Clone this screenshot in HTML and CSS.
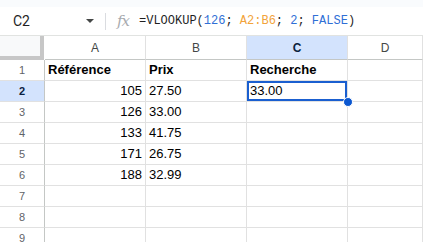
FILE: index.html
```html
<!DOCTYPE html>
<html lang="fr">
<head>
    <meta charset="UTF-8">
    <title>VLOOKUP</title>
    <link rel="stylesheet" href="styles.css">
</head>
<body>

    <div class="top-strip"></div>

    <!-- Formula bar -->
    <div class="formula-bar">
        <div class="name-box">
            <span class="cell-ref">C2</span>
            <span class="caret"></span>
        </div>
        <div class="divider"></div>
        <span class="fx">fx</span>
        <div class="formula">=VLOOKUP(<span class="num">126</span>; <span class="range">A2:B6</span>; <span class="num">2</span>; <span class="num">FALSE</span>)</div>
    </div>

    <!-- Sheet grid -->
    <div class="sheet">
        <div class="corner"></div>
        <div class="col-head">A</div>
        <div class="col-head">B</div>
        <div class="col-head active">C</div>
        <div class="col-head">D</div>

        <div class="row-head">1</div>
        <div class="cell bold">Référence</div>
        <div class="cell bold">Prix</div>
        <div class="cell bold">Recherche</div>
        <div class="cell"></div>

        <div class="row-head active">2</div>
        <div class="cell right">105</div>
        <div class="cell">27.50</div>
        <div class="cell selected">33.00<span class="handle"></span></div>
        <div class="cell"></div>

        <div class="row-head">3</div>
        <div class="cell right">126</div>
        <div class="cell">33.00</div>
        <div class="cell"></div>
        <div class="cell"></div>

        <div class="row-head">4</div>
        <div class="cell right">133</div>
        <div class="cell">41.75</div>
        <div class="cell"></div>
        <div class="cell"></div>

        <div class="row-head">5</div>
        <div class="cell right">171</div>
        <div class="cell">26.75</div>
        <div class="cell"></div>
        <div class="cell"></div>

        <div class="row-head">6</div>
        <div class="cell right">188</div>
        <div class="cell">32.99</div>
        <div class="cell"></div>
        <div class="cell"></div>

        <div class="row-head">7</div>
        <div class="cell"></div>
        <div class="cell"></div>
        <div class="cell"></div>
        <div class="cell"></div>

        <div class="row-head">8</div>
        <div class="cell"></div>
        <div class="cell"></div>
        <div class="cell"></div>
        <div class="cell"></div>

        <div class="row-head">9</div>
        <div class="cell"></div>
        <div class="cell"></div>
        <div class="cell"></div>
        <div class="cell"></div>
    </div>

</body>
</html>
```

FILE: styles.css
```css
body {
    margin: 0;
    background-color: #ffffff;
    font-family: 'Liberation Sans', Arial, sans-serif;
    overflow: hidden;
}

.top-strip {
    height: 7px;
    background-color: #f9fbfd;
}

/* Formula bar */
.formula-bar {
    display: flex;
    align-items: center;
    height: 28px;
    border-bottom: 1px solid #e1e3e1;
}
.name-box {
    display: flex;
    align-items: center;
    justify-content: space-between;
    width: 94px;
    padding-left: 13px;
    box-sizing: border-box;
    padding-right: 0;
}
.cell-ref {
    font-family: Roboto, sans-serif;
    font-size: 14px;
    color: #1f1f1f;
}
.caret {
    width: 0;
    height: 0;
    border-left: 4px solid transparent;
    border-right: 4px solid transparent;
    border-top: 4px solid #444746;
}
.divider {
    width: 1px;
    height: 17px;
    margin-left: 11px;
    background-color: #dadce0;
}
.fx {
    margin-left: 11px;
    width: 22px;
    font-family: 'DejaVu Serif', serif;
    font-style: italic;
    font-size: 15px;
    color: #a8abaf;
    letter-spacing: -1px;
}
.formula {
    font-family: 'Liberation Mono', monospace;
    font-size: 12px;
    color: #1f1f1f;
    white-space: pre;
}
.num {
    color: #2f6fd6;
}
.range {
    color: #f2a33a;
}

/* Grid */
.sheet {
    display: grid;
    grid-template-columns: 45px 101px 101px 101px 1fr;
    grid-template-rows: 24px repeat(9, 21px);
}
.corner {
    background-color: #f8f9fa;
    border-right: 4px solid #c7c7c7;
    border-bottom: 4px solid #c7c7c7;
    box-sizing: border-box;
    margin-right: 1px;
}
.col-head {
    display: flex;
    align-items: center;
    justify-content: center;
    font-size: 12px;
    color: #444746;
    border-right: 1px solid #e1e1e1;
    border-bottom: 1px solid #c4c7c5;
}
.col-head.active {
    background-color: #d3e3fd;
    color: #0b1f40;
    font-weight: bold;
}
.row-head {
    display: flex;
    align-items: center;
    justify-content: center;
    font-size: 11px;
    color: #5f6368;
    border-right: 1px solid #c4c7c5;
    border-bottom: 1px solid #e1e1e1;
}
.row-head.active {
    background-color: #d3e3fd;
    color: #0b1f40;
    font-weight: bold;
}
.cell {
    position: relative;
    padding: 0 3px;
    font-size: 13px;
    line-height: 20px;
    color: #000000;
    border-right: 1px solid #e1e1e1;
    border-bottom: 1px solid #e1e1e1;
    white-space: nowrap;
}
.cell.bold {
    font-weight: bold;
}
.cell.right {
    text-align: right;
}
.cell.selected {
    box-shadow: inset 0 0 0 2px #1a5fd0;
}
.handle {
    position: absolute;
    right: -6px;
    bottom: -6px;
    width: 8px;
    height: 8px;
    border-radius: 50%;
    background-color: #0b57d0;
    border: 1px solid #ffffff;
    z-index: 2;
}
```
